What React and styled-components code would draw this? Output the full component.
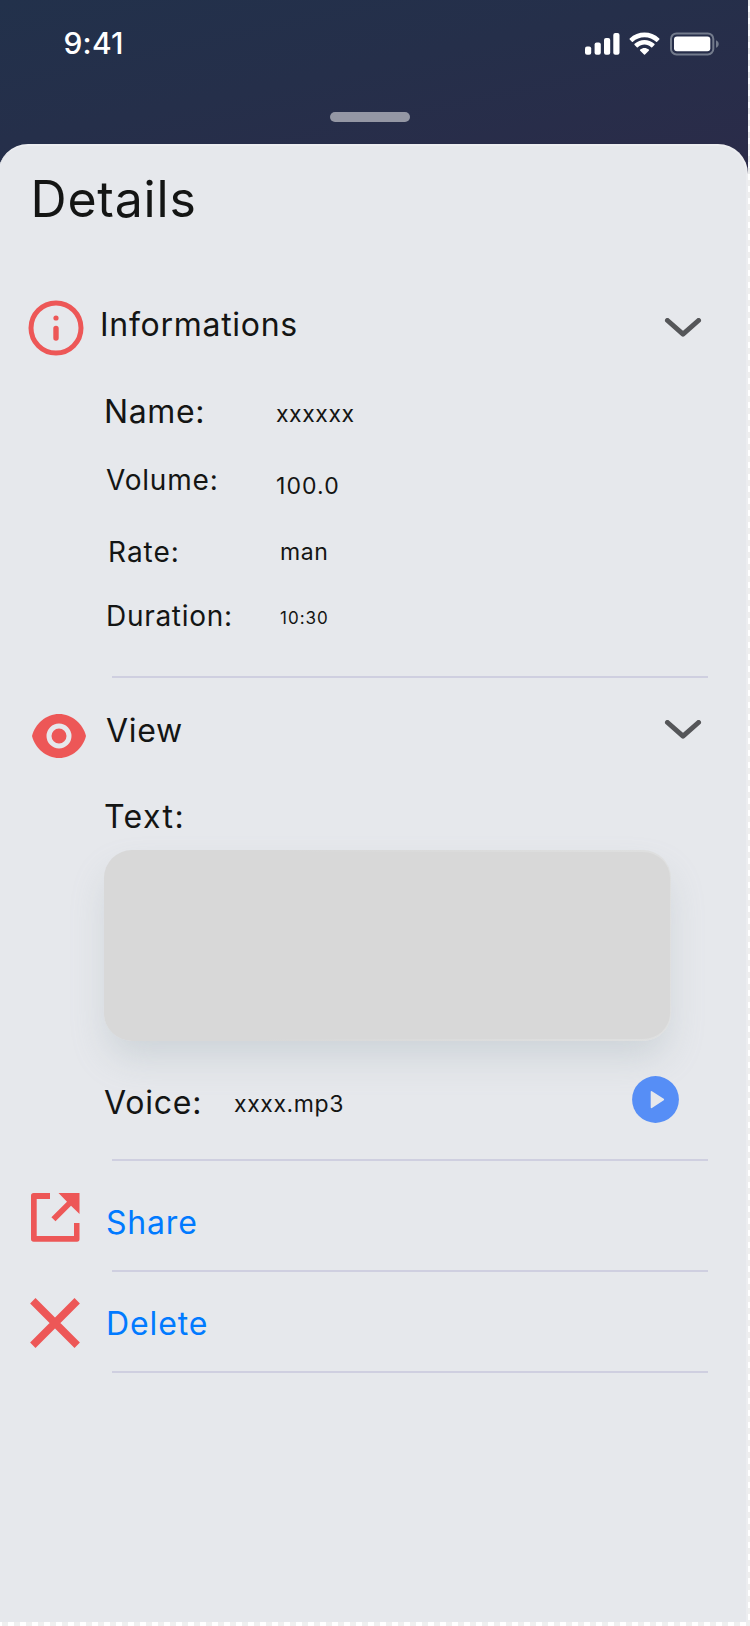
import React from "react";
import styled, { createGlobalStyle } from "styled-components";

const GlobalStyle = createGlobalStyle`
  * { box-sizing: border-box; }
  body {
    margin: 0;
    font-family: Inter, "Liberation Sans", sans-serif;
    background: #fff repeating-conic-gradient(#fff 0 25%, #efefef 0 50%) 2px 0 / 12px 12px;
  }
`;

const Screen = styled.div`
  width: 748px;
  height: 1622px;
  overflow: hidden;
  display: flex;
  flex-direction: column;
  background: linear-gradient(168deg, #22314b 0, #252f4a 140px, #2b2b49 330px);
`;

const StatusBar = styled.header`
  height: 112px;
  flex: none;
  display: flex;
  align-items: flex-start;
  justify-content: space-between;
  padding: 28px 28px 0 63px;
`;

const Clock = styled.time`
  margin-top: -1px;
  padding-left: 0.5px;
  font-size: 30px;
  line-height: 32px;
  font-weight: 550;
  letter-spacing: 0.2px;
  color: #fff;
`;

const StatusIcons = styled.svg`
  display: block;
  margin-top: 2px;
`;

const Grabber = styled.div`
  flex: none;
  width: 80px;
  height: 10px;
  margin: 0 0 22px 330px;
  border-radius: 5px;
  background: #9497a4;
`;

const Sheet = styled.main`
  flex: 1;
  margin-left: -2px;
  padding-left: 2px;
  border: 2px solid #ecedf0;
  border-bottom: 0;
  border-left: 0;
  border-radius: 30px 30px 0 0;
  background: #e6e8ec;
`;

const Title = styled.h1`
  margin: 0;
  height: 126px;
  padding: 23px 0 0 30.5px;
  font-size: 50px;
  line-height: 61px;
  font-weight: 400;
  letter-spacing: 0.8px;
  color: #141514;
`;

const Row = styled.div`
  height: ${(p) => p.$h}px;
  display: flex;
  align-items: flex-start;
  padding-top: ${(p) => p.$top || 0}px;
`;

const IconSlot = styled.div`
  flex: none;
  width: ${(p) => p.$w || 100}px;
  padding-left: ${(p) => p.$x}px;
  margin-top: ${(p) => p.$y || 0}px;
  svg { display: block; }
`;

const Label = styled.span`
  flex: none;
  width: ${(p) => (p.$w ? p.$w + "px" : "auto")};
  margin-left: ${(p) => p.$x || 0}px;
  margin-top: ${(p) => p.$y || 0}px;
  font-size: ${(p) => p.$size || 32}px;
  line-height: 42px;
  letter-spacing: ${(p) => p.$ls ?? 0.8}px;
  white-space: nowrap;
  color: #141514;
`;

const Value = styled(Label)`
  font-size: ${(p) => p.$size || 23}px;
`;

const ActionLink = styled(Label)`
  color: #007aff;
`;

const Trailing = styled.div`
  margin: ${(p) => p.$y}px ${(p) => p.$right}px 0 auto;
  svg { display: block; }
`;

const Divider = styled.hr`
  width: 596px;
  height: 2px;
  margin: 0 0 0 112px;
  border: 0;
  background: #cfcfe0;
`;

const TextBox = styled.div`
  width: 567px;
  height: 191px;
  margin-left: 104px;
  border-radius: 28px;
  border: 2px solid transparent;
  border-right-width: 1px;
  background:
    linear-gradient(#d8d8d8, #d8d8d8) padding-box,
    linear-gradient(100deg, #d8d8d8 30%, #dfe0e0) border-box;
  box-shadow: 0 20px 36px -4px rgba(150, 165, 172, 0.3);
`;

const Chevron = () => (
  <svg width="38" height="22" viewBox="0 0 38 22" fill="none">
    <path d="M3.500 2.500L19 16.200L34.500 2.500" stroke="#555659" strokeWidth="5" strokeLinecap="round" strokeLinejoin="round" />
  </svg>
);

const InfoIcon = () => (
  <svg width="56" height="56" viewBox="0 0 56 56" fill="none">
    <circle cx="28" cy="28" r="25" stroke="#ed5757" strokeWidth="5" />
    <circle cx="28" cy="18" r="2.6" fill="#ed5757" />
    <path d="M28 28.5V38" stroke="#ed5757" strokeWidth="5.4" strokeLinecap="round" />
  </svg>
);

const EyeIcon = () => (
  <svg width="54" height="44" viewBox="0 0 54 44">
    <path d="M0 22C3 10 14 0 27 0S51 10 54 22C51 34 40 44 27 44S3 34 0 22Z" fill="#ed5757" />
    <circle cx="27" cy="22" r="10" fill="none" stroke="#e6e8ec" strokeWidth="5" />
  </svg>
);

const ShareIcon = () => (
  <svg width="49" height="49" viewBox="0 0 49 49" fill="#ed5757">
    <path d="M19 0V6H5.7V43H43V30H48.5V46Q48.5 48.7 46 48.7H2.7Q0 48.7 0 46V2.7Q0 0 2.7 0Z" />
    <path d="M27.5 0H48.5V21L40 12.8L24.5 28.3L20.4 24.3L36 8.7Z" />
  </svg>
);

const CrossIcon = () => (
  <svg width="50" height="50" viewBox="0 0 50 50" fill="none">
    <path d="M2.8 2.8L47.2 47.2M47.2 2.8L2.8 47.2" stroke="#ed5757" strokeWidth="7.6" />
  </svg>
);

const PlayIcon = () => (
  <svg width="47" height="47" viewBox="0 0 47 47">
    <circle cx="23.5" cy="23.5" r="23.4" fill="#568ef6" />
    <path d="M19.500 15.800L31.300 23.500L19.500 31.400Z" fill="#e6e8ec" stroke="#e6e8ec" strokeWidth="1.6" strokeLinejoin="round" />
  </svg>
);

export default function App() {
  return (
    <>
      <GlobalStyle />
      <Screen>
        <StatusBar>
          <Clock>9:41</Clock>
          <StatusIcons width="135" height="28" viewBox="585 30 135 28" fill="#fff">
            <rect x="585" y="46.5" width="6.2" height="8.3" rx="2" />
            <rect x="594.6" y="42.6" width="6.2" height="12.2" rx="2" />
            <rect x="604" y="38" width="6.2" height="16.8" rx="2" />
            <rect x="613.3" y="33" width="6.2" height="21.8" rx="2" />
            <path d="M644.5 37.2c4.5 0 8.600 1.700 11.600 4.600a.7.7 0 0 0 1 0l2.200-2.200a.8.8 0 0 0 0-1.100c-8.200-7.900-21.400-7.900-29.600 0a.8.8 0 0 0 0 1.100l2.200 2.200a.7.7 0 0 0 1 0c3.100-3 7.200-4.600 11.600-4.600Zm0 7.400c2.400 0 4.800.9 6.600 2.600a.8.8 0 0 0 1.100 0l2.200-2.200a.8.8 0 0 0 0-1.200c-5.600-5.200-14.200-5.200-19.800 0a.8.8 0 0 0 0 1.200l2.200 2.200a.8.8 0 0 0 1.100 0c1.800-1.700 4.200-2.600 6.600-2.600Zm4.300 4.900a.8.8 0 0 1 0 1.200l-3.800 3.800a.7.7 0 0 1-1 0l-3.800-3.800a.8.8 0 0 1 0-1.200c2.500-2.100 6.100-2.100 8.600 0Z" />
            <rect x="671" y="33.400" width="42.300" height="21" rx="5.500" fill="none" stroke="#737b8c" strokeWidth="2" />
            <rect x="674" y="36.500" width="36.300" height="14.800" rx="3" />
            <path d="M716 40.200v7.600c1.700-.7 2.700-2 2.700-3.800s-1-3.100-2.700-3.800Z" fill="#737b8c" />
          </StatusIcons>
        </StatusBar>
        <Grabber />
        <Sheet>
          <Title>Details</Title>

          <Row $h={119} $top={32}>
            <IconSlot $x={28} $y={-4}><InfoIcon /></IconSlot>
            <Label $ls={0.72}>Informations</Label>
            <Trailing $y={14} $right={44}><Chevron /></Trailing>
          </Row>
          <Row $h={69}>
            <Label $x={104} $w={172} $ls={0.6}>Name:</Label>
            <Value $y={2} $ls={0.55}>xxxxxx</Value>
          </Row>
          <Row $h={71}>
            <Label $size={28} $x={106} $y={-1} $w={170}>Volume:</Label>
            <Value $y={5} $ls={1.1}>100.0</Value>
          </Row>
          <Row $h={64}>
            <Label $size={28} $x={108} $w={172} $ls={1}>Rate:</Label>
            <Value $ls={0.6}>man</Value>
          </Row>
          <Row $h={81}>
            <Label $size={28} $x={106} $w={174} $ls={0.7}>Duration:</Label>
            <Value $size={17} $y={2} $ls={1}>10:30</Value>
          </Row>
          <Divider />

          <Row $h={118} $top={32}>
            <IconSlot $x={32} $y={4} $w={106}><EyeIcon /></IconSlot>
            <Label $ls={0.7}>View</Label>
            <Trailing $y={10} $right={44}><Chevron /></Trailing>
          </Row>
          <Row $h={54}>
            <Label $x={104} $ls={1.45}>Text:</Label>
          </Row>
          <TextBox />
          <Row $h={118} $top={41}>
            <Label $x={104} $w={130}>Voice:</Label>
            <Value $y={1} $ls={0.6}>xxxx.mp3</Value>
            <Trailing $y={-6} $right={67}><PlayIcon /></Trailing>
          </Row>
          <Divider />

          <Row $h={109} $top={41}>
            <IconSlot $x={31} $y={-9} $w={106}><ShareIcon /></IconSlot>
            <ActionLink>Share</ActionLink>
          </Row>
          <Divider />
          <Row $h={99} $top={31}>
            <IconSlot $x={30} $y={-5} $w={106}><CrossIcon /></IconSlot>
            <ActionLink $ls={0.9}>Delete</ActionLink>
          </Row>
          <Divider />
        </Sheet>
      </Screen>
    </>
  );
}
